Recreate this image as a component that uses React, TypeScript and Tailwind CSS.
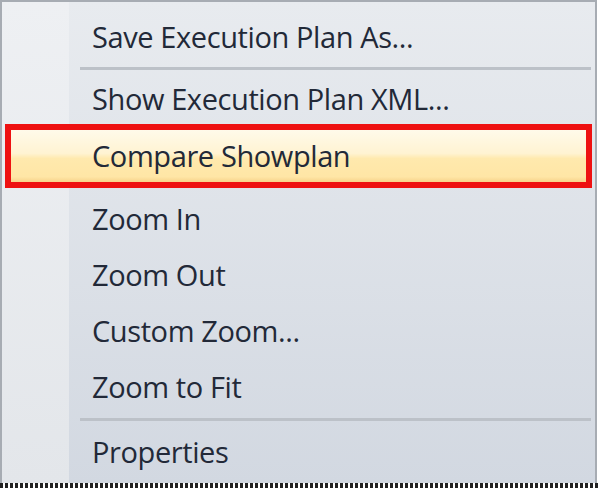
import React from "react";

const font = { fontFamily: '"Open Sans", "Noto Sans", sans-serif' };

function Item({ label }: { label: string }) {
  return (
    <div className="h-[56px] flex items-center pl-[90px] text-[29px] text-[#222938] tracking-[-0.4px]">
      {label}
    </div>
  );
}

export default function App() {
  return (
    <div className="w-[599px] h-[488px] bg-white overflow-hidden relative" style={font}>
      <div className="h-[483px] w-[597px] border-l-2 border-t-2 border-r-2 border-[#a7acb3] bg-[linear-gradient(to_bottom,#e8ebef,#d2d8e1)] relative">
        <div className="absolute left-0 top-0 bottom-0 w-[67px] bg-[linear-gradient(to_bottom,#eef0f3,#e3e6ea)]" />
        <div className="relative flex flex-col pt-[7px]">
          <Item label="Save Execution Plan As..." />
          <div className="h-[6px] flex items-center pl-[78px] pr-[4px]">
            <div className="h-[3px] w-full bg-[#bcc1c8]" />
          </div>
          <Item label="Show Execution Plan XML..." />
          <div className="mx-[3px] -mt-[3px] border-[6px] border-[#ee1111] bg-[linear-gradient(to_bottom,#fffaea_0%,#fff3d2_45%,#ffe9ad_55%,#ffe6a6_90%,#f8d38a_100%)] h-[64px] flex items-center pl-[81px] text-[29px] text-[#222938] tracking-[-0.4px]">
            Compare Showplan
          </div>
          <div className="h-[3px]" />
          <Item label="Zoom In" />
          <Item label="Zoom Out" />
          <Item label="Custom Zoom..." />
          <Item label="Zoom to Fit" />
          <div className="h-[9px] flex items-center pl-[78px] pr-[4px]">
            <div className="h-[3px] w-full bg-[#bcc1c8]" />
          </div>
          <Item label="Properties" />
        </div>
      </div>
      <div className="h-[5px] w-full bg-[repeating-linear-gradient(to_right,#222_0px,#222_3px,#fff_3px,#fff_5px)]" />
    </div>
  );
}
